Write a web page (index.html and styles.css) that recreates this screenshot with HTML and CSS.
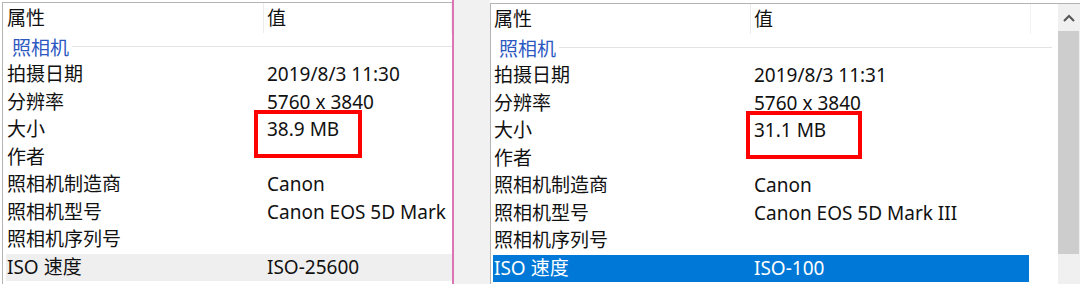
FILE: index.html
```html
<!DOCTYPE html>
<html lang="zh-CN">
<head>
    <meta charset="UTF-8">
    <title>属性</title>
    <link rel="stylesheet" href="styles.css">
</head>
<body>
    <div class="screen">
        <div class="pane pane-left">
            <div class="list">
                <div class="row header">
                    <div class="cell name">属性</div>
                    <div class="cell value">值</div>
                </div>
                <div class="group"><span>照相机</span><i class="rule"></i></div>
                <div class="row"><div class="cell name">拍摄日期</div><div class="cell value">2019/8/3 11:30</div></div>
                <div class="row"><div class="cell name">分辨率</div><div class="cell value">5760 x 3840</div></div>
                <div class="row"><div class="cell name">大小</div><div class="cell value">38.9 MB</div></div>
                <div class="row"><div class="cell name">作者</div><div class="cell value"></div></div>
                <div class="row"><div class="cell name">照相机制造商</div><div class="cell value">Canon</div></div>
                <div class="row"><div class="cell name">照相机型号</div><div class="cell value">Canon EOS 5D Mark</div></div>
                <div class="row"><div class="cell name">照相机序列号</div><div class="cell value"></div></div>
                <div class="row selected-gray"><div class="cell name">ISO 速度</div><div class="cell value">ISO-25600</div></div>
            </div>
            <div class="mark mark-left"></div>
        </div>
        <div class="divider"></div>
        <div class="gap"></div>
        <div class="pane pane-right">
            <div class="list">
                <div class="row header">
                    <div class="cell name">属性</div>
                    <div class="cell value">值</div>
                    <div class="cell extra"></div>
                </div>
                <div class="group"><span>照相机</span><i class="rule"></i></div>
                <div class="row"><div class="cell name">拍摄日期</div><div class="cell value">2019/8/3 11:31</div></div>
                <div class="row"><div class="cell name">分辨率</div><div class="cell value">5760 x 3840</div></div>
                <div class="row"><div class="cell name">大小</div><div class="cell value">31.1 MB</div></div>
                <div class="row"><div class="cell name">作者</div><div class="cell value"></div></div>
                <div class="row"><div class="cell name">照相机制造商</div><div class="cell value">Canon</div></div>
                <div class="row"><div class="cell name">照相机型号</div><div class="cell value">Canon EOS 5D Mark III</div></div>
                <div class="row"><div class="cell name">照相机序列号</div><div class="cell value"></div></div>
                <div class="row selected-blue"><div class="cell name">ISO 速度</div><div class="cell value">ISO-100</div></div>
            </div>
            <div class="mark mark-right"></div>
            <div class="scrollbar">
                <div class="arrow">
                    <svg width="12" height="8" viewBox="0 0 12 8"><path d="M1 7 L6 2 L11 7" fill="none" stroke="#555" stroke-width="2"/></svg>
                </div>
                <div class="thumb"></div>
            </div>
        </div>
    </div>
</body>
</html>
```

FILE: styles.css
```css
body {
    margin: 0;
    padding: 0;
    background-color: #ffffff;
    font-family: "Noto Sans", "Noto Sans CJK SC", sans-serif;
    font-size: 19px;
    color: #111111;
}
.screen {
    display: flex;
    height: 284px;
    overflow: hidden;
}
.pane {
    position: relative;
    display: flex;
    margin-top: 2px;
    border-top: 1px solid #b4b4b4;
    border-left: 1px solid #b4b4b4;
    background-color: #ffffff;
}
.pane-left {
    width: 449px;
    margin-left: 2px;
}
.pane-right {
    width: 589px;
    margin-top: 3px;
}
.divider {
    width: 2px;
    background-color: #dd74b4;
}
.gap {
    width: 36px;
    background-color: #f1f1f1;
}
.list {
    flex: 1;
    padding-left: 3px;
}
.pane-right .list {
    padding-left: 2px;
}
.row {
    display: grid;
    grid-template-columns: 258px 1fr;
    height: 27.5px;
    line-height: 27.5px;
    white-space: nowrap;
    overflow: hidden;
}
.pane-right .row {
    grid-template-columns: 258px 280px 1fr;
}
.cell {
    padding-left: 1px;
    overflow: hidden;
}
.value {
    padding-left: 3px;
}
.header {
    height: 30px;
    line-height: 30px;
}
.header .name {
    border-right: 1px solid #ececec;
}
.header .value {
    border-right: 1px solid #f2f2f2;
}
.group {
    display: flex;
    align-items: center;
    height: 28px;
    padding-left: 6px;
    color: #2c58c2;
}
.group .rule {
    flex: 1;
    height: 1px;
    margin-left: 3px;
    margin-top: -1px;
    background-color: #e3e3e3;
}
.pane-right .group .rule {
    margin-right: 6px;
}
.selected-gray {
    background-color: #efefef;
}
.selected-blue {
    width: 536px;
    background-color: #0078d7;
    color: #ffffff;
}
.mark {
    position: absolute;
    top: 107px;
    height: 40px;
    border: 4px solid #ff0000;
}
.mark-left {
    left: 251px;
    width: 100px;
}
.mark-right {
    left: 255px;
    width: 108px;
}
.scrollbar {
    width: 22px;
    display: flex;
    flex-direction: column;
    background-color: #f0f0f0;
}
.arrow {
    height: 27px;
    display: flex;
    justify-content: center;
    align-items: center;
}
.thumb {
    height: 223px;
    margin: 0 1px 0 0;
    background-color: #cdcdcd;
}
```
